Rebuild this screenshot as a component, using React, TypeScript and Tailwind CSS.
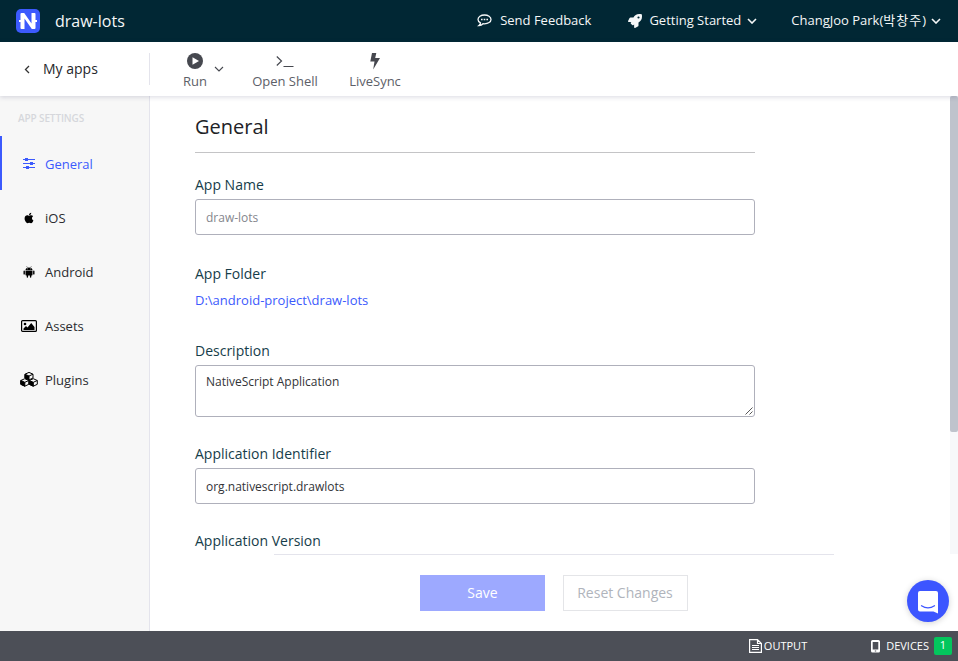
import type { ReactNode } from "react";
import { FaApple, FaRocket } from "react-icons/fa";

function Chevron({ className = "", width = 1.6 }: { className?: string; width?: number }) {
  return (
    <svg className={className} width="10" height="6" viewBox="0 0 10 6" fill="none" stroke="currentColor" strokeWidth={width}>
      <path d="M1 1l4 4 4-4" />
    </svg>
  );
}

function Logo() {
  return (
    <svg width="24" height="24" viewBox="0 0 24 24">
      <rect width="24" height="24" rx="5" fill="#3c5afd" />
      <path d="M3 12h4M17 12h4" fill="none" stroke="#fff" strokeWidth="2" />
      <path d="M4.500 5Q4.500 4 5.500 4H8.200L15.500 14.500V4H18.500Q19.500 4 19.500 5V19Q19.500 20 18.500 20H15.800L8.500 9.500V20H5.500Q4.500 20 4.500 19z" fill="#fff" />
    </svg>
  );
}

function AndroidIcon() {
  return (
    <svg width="12" height="12" viewBox="0 0 12 12">
      <path d="M2.500 4Q2.700 1.400 6 1.400T9.500 4zM2.500 4.600h7v4.200q0 .6-.6.600H8.300v1.700q0 .7-.7.700t-.7-.7V9.400H5.100v1.700q0 .7-.7.700t-.7-.7V9.400h-.6q-.6 0-.6-.6z" />
      <path d="M1.200 5.200v2.700M10.800 5.200v2.700" stroke="#000" strokeWidth="1.400" strokeLinecap="round" />
      <path d="M3.600.3L4.500 1.700M8.400.3L7.500 1.700" stroke="#000" strokeWidth=".5" />
      <path d="M4.200 2.500h.7v.7h-.7zM7.100 2.500h.7v.7h-.7z" fill="#f7f7f7" />
    </svg>
  );
}

function Tool({ icon, label, width }: { icon: ReactNode; label: string; width: string }) {
  return (
    <div className={`flex flex-col items-center ${width}`}>
      <div className="flex h-5 items-center justify-center">{icon}</div>
      <span className="mt-[1px] h-[18px] text-[13px] leading-[18px] whitespace-nowrap text-[#5d6068]">{label}</span>
    </div>
  );
}

function NavItem({ icon, label, active = false }: { icon: ReactNode; label: string; active?: boolean }) {
  return (
    <div
      className={`flex h-[54px] items-center border-l-2 pt-px pl-[18px] text-[13px] ${
        active ? "border-[#3c5afd] text-[#3c5afd]" : "border-transparent text-[#2b2c30]"
      }`}
    >
      <span className="flex w-[18px] justify-center">{icon}</span>
      <span className="ml-[7px] pt-[2px]">{label}</span>
    </div>
  );
}

function Label({ children }: { children: ReactNode }) {
  return <div className="h-5 text-[14px] leading-5 text-[#163d4a]">{children}</div>;
}

export default function App() {
  return (
    <div
      className="flex h-[661px] w-[958px] flex-col overflow-hidden bg-white"
      style={{ fontFamily: '"Open Sans", "Noto Sans CJK KR", sans-serif' }}
    >
      <header className="flex h-[42px] shrink-0 items-center bg-[#012734] pr-[17px] pl-4 text-[13px] font-medium text-[#f5f7f8]">
        <Logo />
        <span className="ml-[15px] text-[16px]">draw-lots</span>
        <div className="ml-auto flex items-center pb-px">
          <svg width="15" height="13" viewBox="0 0 15 13" fill="none" stroke="currentColor">
            <path d="M7.500 1C3.900 1 1 2.900 1 5.400c0 1.500 1 2.700 2.500 3.500-.1 1-.6 1.900-1.500 2.600 1.700-.1 3-.7 4-1.800l1.500.1c3.600 0 6.500-1.900 6.500-4.400S11.100 1 7.500 1z" strokeWidth="1.300" />
            <path d="M4 5.500h1.600M6.700 5.500h1.600M9.400 5.500H11" strokeWidth="1.600" />
          </svg>
          <span className="ml-2">Send Feedback</span>
          <FaRocket className="ml-[37px]" size={14} />
          <span className="ml-[7px]">Getting Started</span>
          <Chevron className="ml-[6px]" />
          <span className="ml-[34px] pb-px leading-5">
            ChangJoo Park(<span className="font-normal tracking-[1px]">박창주</span>)
          </span>
          <Chevron className="ml-[5px]" />
        </div>
      </header>

      <div className="relative z-10 flex h-[54px] shrink-0 bg-white shadow-[0_1px_5px_rgba(40,40,90,0.18)]">
        <div className="my-[11px] flex w-[150px] items-center border-r border-[#e4e4ec] pl-6">
          <svg width="6" height="9" viewBox="0 0 6 9" fill="none" stroke="#333" strokeWidth="1.300">
            <path d="M5 1L1.500 4.500 5 8" />
          </svg>
          <span className="ml-[13px] pb-[2px] text-[14px] text-[#26272b]">My apps</span>
        </div>
        <div className="flex pt-[9px] pl-[33px] text-[#46484f]">
          <Tool
            width="w-6"
            label="Run"
            icon={
              <svg width="16" height="16" viewBox="0 0 16 16">
                <circle cx="8" cy="8" r="8" fill="currentColor" />
                <path d="M5.500 4.200v7.600L12 8z" fill="#fff" />
              </svg>
            }
          />
          <Chevron className="mt-[15px] ml-[7px]" width={1.1} />
          <div className="ml-[28px]">
            <Tool
              width="w-[66px]"
              label="Open Shell"
              icon={
                <svg width="18" height="14" viewBox="0 0 18 14" fill="none" stroke="currentColor" strokeWidth="1.200">
                  <path d="M.8 2.500L5.500 7 .8 11.500M7.500 12.500h10" />
                </svg>
              }
            />
          </div>
          <div className="ml-[31px]">
            <Tool
              width="w-[52px]"
              label="LiveSync"
              icon={
                <svg width="10" height="18" viewBox="0 0 10 18" fill="currentColor">
                  <path d="M2 1H6.300L5.200 6H10L3.200 17.500 4.500 9.500H.3z" />
                </svg>
              }
            />
          </div>
        </div>
      </div>

      <div className="flex min-h-0 flex-1">
        <nav className="w-[150px] shrink-0 border-r border-[#e4e4ec] bg-[#f7f7f7]">
          <div className="h-10 pt-[15px] pl-[18px] text-[10px] leading-[15px] font-semibold tracking-[-0.12px] text-[#d6d7dc]">APP SETTINGS</div>
          <NavItem
            active
            label="General"
            icon={
              <svg className="mt-px" width="12" height="12" viewBox="0 0 12 12" fill="currentColor">
                <path d="M0 1h12v1H0zM0 5h12v1H0zM0 9h12v1H0z" />
                <path d="M2 0h3v3H2zM7 4h3v3H7zM3 8h3v3H3z" />
              </svg>
            }
          />
          <NavItem label="iOS" icon={<FaApple size={12} color="#000" />} />
          <NavItem label="Android" icon={<AndroidIcon />} />
          <NavItem
            label="Assets"
            icon={
              <svg width="16" height="12" viewBox="0 0 16 12">
                <rect x=".6" y=".6" width="14.800" height="10.800" rx="1" fill="none" stroke="#000" strokeWidth="1.200" />
                <circle cx="4" cy="4" r="1.300" />
                <path d="M2.500 10V8.500L5 6l1.500 1.500L10.200 3l3.300 4v3z" />
              </svg>
            }
          />
          <NavItem
            label="Plugins"
            icon={
              <svg width="18" height="15" viewBox="0 0 18 15" stroke="#000" strokeWidth="1" strokeLinejoin="round">
                {["translate(4.800 .4)", "translate(.6 6.700)", "translate(9.100 6.700)"].map((place) => (
                  <g key={place} transform={place}>
                    <path d="M4.200 0L8.200 1.800V5.600L4.200 7.500.200 5.600V1.800z" fill="#f7f7f7" />
                    <path d="M.2 1.800L4.200 3.600V7.500L.2 5.600z" fill="#000" />
                    <path d="M4.200 3.600L8.200 1.800" fill="none" />
                  </g>
                ))}
              </svg>
            }
          />
        </nav>

        <main className="flex min-w-0 flex-1 flex-col">
          <div className="flex h-[458px] shrink-0">
            <section className="ml-[45px] w-[560px]">
              <h1 className="h-[57px] border-b border-[#c4c4c6] pt-[16px] text-[20px] leading-[30px] text-[#212226]">General</h1>
              <div className="pt-[22px]">
                <Label>App Name</Label>
                <div className="mt-1 flex h-9 items-center rounded-[3px] border border-[#afb0bb] px-[10px] pt-px text-[12px] text-[#85868d]">draw-lots</div>
              </div>
              <div className="pt-[29px]">
                <Label>App Folder</Label>
                <div className="mt-[6px] h-5 text-[13px] leading-5 text-[#3c5afd]">D:\android-project\draw-lots</div>
              </div>
              <div className="pt-[31px]">
                <Label>Description</Label>
                <div className="mt-1 flex h-[52px] justify-between rounded-[3px] border border-[#afb0bb] pl-[10px] text-[12px] leading-4 text-[#333438]">
                  <span className="pt-2">NativeScript Application</span>
                  <svg className="mr-px mb-px self-end" width="8" height="8" viewBox="0 0 8 8" stroke="#444" strokeWidth=".9">
                    <path d="M.5 7.500l7-7M4.500 7.500l3-3" />
                  </svg>
                </div>
              </div>
              <div className="pt-[27px]">
                <Label>Application Identifier</Label>
                <div className="mt-1 flex h-9 items-center rounded-[3px] border border-[#afb0bb] px-[10px] pt-px text-[12px] text-[#333438]">org.nativescript.drawlots</div>
              </div>
              <div className="pt-[27px]">
                <Label>Application Version</Label>
              </div>
            </section>
            <div className="ml-auto w-2 bg-[#f7f8fa]">
              <div className="h-[336px] rounded-[2px] bg-[#bfc3cc]" />
            </div>
          </div>
          <div className="ml-[124px] flex h-[57px] w-[560px] justify-center gap-[18px] border-t border-[#e4e4ec] pt-5">
            <button className="h-9 w-[125px] bg-[#9da9ff] pb-[2px] text-[14px] font-medium text-white">Save</button>
            <button className="h-9 w-[125px] border border-[#e4e5e8] pr-px pb-[2px] text-[14px] text-[#b0b4bc]">Reset Changes</button>
          </div>
        </main>
      </div>

      <footer className="flex h-[30px] shrink-0 items-center bg-[#4c4f57] pr-[6px] text-[11px] font-medium text-white">
        <svg className="ml-auto" width="13" height="14" viewBox="0 0 13 14" fill="none" stroke="currentColor" strokeWidth="1.200">
          <path d="M.6.6h7.900l3.900 3.900v8.900H.6zM8.500.6v3.900h3.900M3 6.500h7M3 8.500h7M3 10.500h7" />
        </svg>
        <span className="ml-[2px]">OUTPUT</span>
        <svg className="ml-[64px]" width="9" height="13" viewBox="0 0 9 13" fill="currentColor">
          <path fillRule="evenodd" d="M1.500 0h6Q9 0 9 1.500v9.500q0 1.500-1.500 1.500h-6Q0 12.500 0 11V1.500Q0 0 1.500 0zM1.700 2v7.500h5.600V2zM3.800 10.500v1h1.400v-1z" />
        </svg>
        <span className="ml-[6px]">DEVICES</span>
        <span className="mb-px ml-[5px] flex h-[18px] w-[18px] items-center justify-center rounded-[2px] bg-[#04c65d]">1</span>
      </footer>

      <button className="absolute top-[580px] left-[907px] z-20 flex h-[42px] w-[42px] items-center justify-center rounded-full bg-[#3c55ff] shadow-[0_1px_6px_rgba(0,0,0,0.18)]">
        <svg className="mt-px" width="20" height="24" viewBox="0 0 20 24">
          <path d="M2 1h16Q20 1 20 3V23.500L15.500 21.500H2Q0 21.500 0 19.500V3Q0 1 2 1z" fill="#fff" />
          <path d="M3.500 15.800q6.500 4.200 13 0" fill="none" stroke="#3c55ff" strokeWidth="1.300" strokeLinecap="round" />
        </svg>
      </button>
    </div>
  );
}
